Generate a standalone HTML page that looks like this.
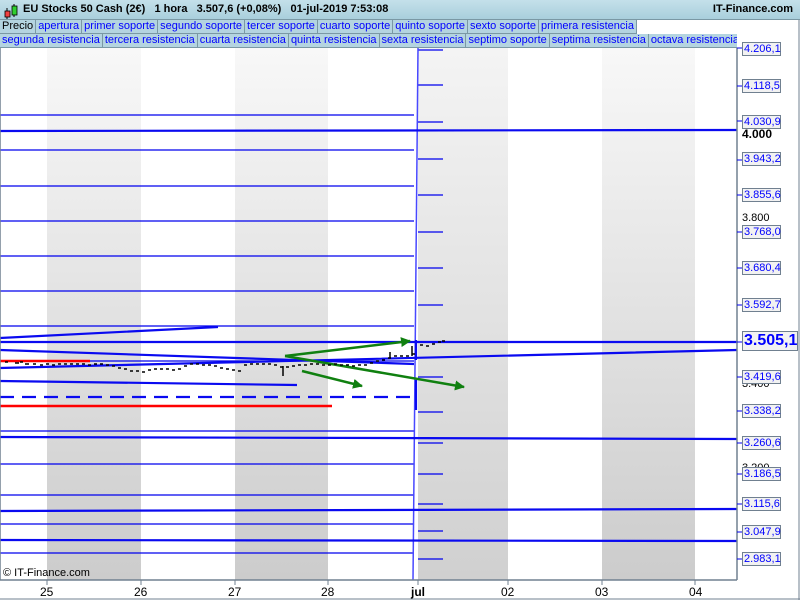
<!DOCTYPE html>
<html><head><meta charset="utf-8"><style>
body{margin:0;width:800px;height:600px;overflow:hidden;font-family:"Liberation Sans",sans-serif;background:#fff;position:relative}
#hdr{position:absolute;left:0;top:0;width:800px;height:20px;background:linear-gradient(#c4e0ea,#a9cfdc);border-bottom:1px solid #7a98a4;box-sizing:border-box;font-size:11px;font-weight:bold;color:#000}
.row{position:absolute;left:0;height:14px;display:flex;font-size:11px;white-space:nowrap;overflow:hidden}
.row span{background:#b4d4e0;border-right:1px solid #7a98a4;border-bottom:1px solid #7a98a4;color:#0000ff;padding:0 2px;line-height:13px;box-sizing:border-box;height:14px}
.pl{position:absolute;left:742px;width:39px;height:14px;background:#f2f2f2;border:1px solid #708090;box-sizing:border-box;color:#0000ff;font-size:11px;line-height:12px;padding-left:1px}
.bl{position:absolute;left:742px;font-size:11px;color:#000}
.xl{position:absolute;top:585px;font-size:12px;color:#000}
</style></head><body>
<svg width="800" height="600" style="position:absolute;left:0;top:0">
<defs>
<linearGradient id="g1" x1="0" y1="0" x2="0" y2="1"><stop offset="0" stop-color="#f8f8f8"/><stop offset="1" stop-color="#cccccc"/></linearGradient>
<linearGradient id="g2" x1="0" y1="0" x2="0" y2="1"><stop offset="0" stop-color="#f4f4f4"/><stop offset="1" stop-color="#d0d0d0"/></linearGradient>
<marker id="ar" markerWidth="10" markerHeight="10" refX="9" refY="5" orient="auto" markerUnits="userSpaceOnUse" viewBox="0 0 10 10"><path d="M0,0L10,5L0,10z" fill="#108010"/></marker>
</defs>
<rect x="47" y="48" width="94" height="532" fill="url(#g1)"/>
<rect x="235" y="48" width="93" height="532" fill="url(#g1)"/>
<rect x="418" y="48" width="90" height="532" fill="url(#g2)"/>
<rect x="602" y="48" width="93" height="532" fill="url(#g1)"/>
<g stroke="#0000ee" stroke-width="1.2" fill="none">
<path d="M0,115H414M0,150H414M0,186H414M0,221H414M0,256H414M0,291H414M0,326H414M0,361H414M0,431H414M0,464H414M0,495H414M0,524H414M0,553H414"/>
<path d="M418,50H443M418,85H443M418,122H443M418,159H443M418,195H443M418,232H443M418,268H443M418,305H443M418,377H443M418,412H443M418,443H443M418,474H443M418,504H443M418,531H443M418,559H443"/>
</g>
<path d="M413,580L418,48" stroke="#4848ff" stroke-width="1.5" fill="none"/>
<g stroke="#0a0af0" stroke-width="2.2" fill="none">
<path d="M0,131L737,130M0,342H737M0,437L737,439M0,511L737,509M0,540L737,541"/>
<path d="M0,338L218,327M0,350L414,364M0,368L737,350M0,381L297,385"/>
<path d="M0,397H412" stroke-dasharray="14,8"/>
<path d="M416,380V410M416,340V360"/>
</g>
<g stroke="#ff0000" stroke-width="2.5"><path d="M0,361H90M0,406H332"/></g>
<g stroke="#108010" stroke-width="2.5" fill="none" marker-end="url(#ar)">
<path d="M285,356L410,341"/><path d="M285,356L464,387"/><path d="M302,371L362,386"/>
</g>
<g stroke="#000" stroke-width="1.5">
<path d="M5,362h3M15,363h4M20,362h3M25,364h4M33,364h3M40,365h3M46,364h3M52,365h3M58,364h3M64,364h3M70,364h3M76,364h3M82,364h3M88,365h3M94,364h3M100,364h3M106,365h3M112,366h3M118,368h3M124,369h3M130,371h3M136,371h3M142,372h3M148,370h3M154,369h3M160,369h3M166,369h3M172,370h3M178,369h3M184,366h3M190,364h3M196,364h3M202,365h3M208,365h3M214,366h3M220,368h3M226,369h3M232,370h3M238,371h3M244,365h3M250,364h3M256,364h3M262,364h3M268,364h3M274,365h3M280,367h3M286,367h3M292,366h3M298,365h3M304,365h3M310,364h3M316,364h3M322,365h3M328,365h3M334,364h3M340,365h3M346,365h3M352,366h3M358,365h3M364,365h3M370,363h3M376,361h3M382,360h3M388,358h3M394,356h3M400,356h3M406,356h3M412,354h3M420,345h3M426,346h3M432,344h3M438,342h3M442,341h3"/>
<path d="M283,366v10M390,352v6M412,346v10"/>
</g>
<path d="M737,48V580M0,580H737M0,48V580" stroke="#708090" stroke-width="1.5" fill="none"/>
<g stroke="#708090"><path d="M47,580v5M141,580v5M235,580v5M328,580v5M418,580v5M508,580v5M602,580v5M695,580v5"/></g>
<g stroke="#0000ee"><path d="M737,48h5M737,86h5M737,121h5M737,160h5M737,195h5M737,232h5M737,268h5M737,305h5M737,342h5M737,377h5M737,411h5M737,443h5M737,474h5M737,504h5M737,532h5M737,559h5"/></g>
<path d="M799,0V600M0,599H800" stroke="#708090"/>
</svg>
<div id="hdr"><svg width="16" height="18" style="position:absolute;left:3px;top:2px"><path d="M4,6V17M11,2V15" stroke="#000"/><rect x="2" y="9" width="5" height="6" fill="#f04040" stroke="#000" stroke-width=".8"/><rect x="9" y="4" width="5" height="9" fill="#30d030" stroke="#000" stroke-width=".8"/></svg>
<span style="position:absolute;left:23px;top:3px">EU Stocks 50 Cash (2€)&nbsp;&nbsp;&nbsp;1 hora&nbsp;&nbsp;&nbsp;3.507,6 (+0,08%)&nbsp;&nbsp;&nbsp;01-jul-2019 7:53:08</span>
<span style="position:absolute;right:7px;top:3px">IT-Finance.com</span></div>
<div class="row" style="top:20px;width:737px"><span style="color:#000">Precio</span><span>apertura</span><span>primer soporte</span><span>segundo soporte</span><span>tercer soporte</span><span>cuarto soporte</span><span>quinto soporte</span><span>sexto soporte</span><span>primera resistencia</span></div>
<div class="row" style="top:34px;width:737px"><span>segunda resistencia</span><span>tercera resistencia</span><span>cuarta resistencia</span><span>quinta resistencia</span><span>sexta resistencia</span><span>septimo soporte</span><span>septima resistencia</span><span>octava resistencia</span></div>
<div class="bl" style="top:212px">3.800</div>
<div class="bl" style="top:378px">3.400</div>
<div class="bl" style="top:462px">3.200</div>
<div class="pl" style="top:42px">4.206,1</div>
<div class="pl" style="top:79px">4.118,5</div>
<div class="pl" style="top:115px">4.030,9</div>
<div class="bl" style="top:127px;font-weight:bold;font-size:12px">4.000</div>
<div class="pl" style="top:152px">3.943,2</div>
<div class="pl" style="top:188px">3.855,6</div>
<div class="pl" style="top:225px">3.768,0</div>
<div class="pl" style="top:261px">3.680,4</div>
<div class="pl" style="top:298px">3.592,7</div>
<div class="pl" style="top:331px;width:56px;height:20px;font-size:16px;font-weight:bold;line-height:18px">3.505,1</div>
<div class="pl" style="top:370px">3.419,6</div>
<div class="pl" style="top:404px">3.338,2</div>
<div class="pl" style="top:436px">3.260,6</div>
<div class="pl" style="top:467px">3.186,5</div>
<div class="pl" style="top:497px">3.115,6</div>
<div class="pl" style="top:525px">3.047,9</div>
<div class="pl" style="top:552px">2.983,1</div>
<div style="position:absolute;left:3px;top:567px;font-size:11px">© IT-Finance.com</div>
<div class="xl" style="left:40px">25</div><div class="xl" style="left:134px">26</div><div class="xl" style="left:228px">27</div><div class="xl" style="left:321px">28</div><div class="xl" style="left:411px;font-weight:bold">jul</div><div class="xl" style="left:501px">02</div><div class="xl" style="left:595px">03</div><div class="xl" style="left:689px">04</div>
</body></html>
